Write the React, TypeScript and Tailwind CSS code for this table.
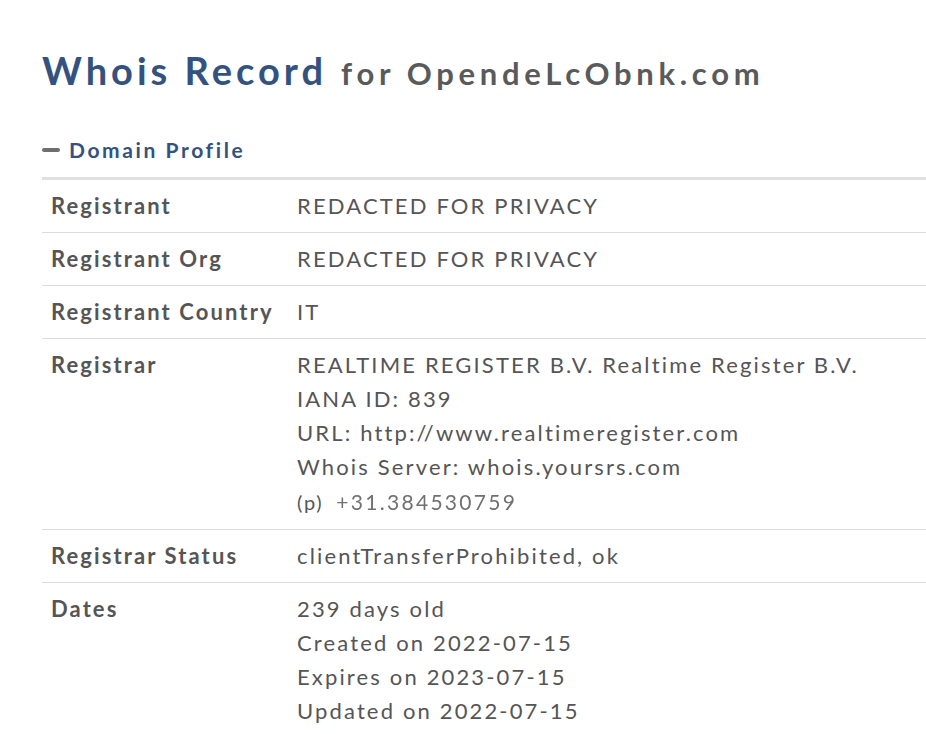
import React from "react";

type Row = {
  label: string;
  lines: React.ReactNode[];
};

const rows: Row[] = [
  { label: "Registrant", lines: ["REDACTED FOR PRIVACY"] },
  { label: "Registrant Org", lines: ["REDACTED FOR PRIVACY"] },
  { label: "Registrant Country", lines: ["IT"] },
  {
    label: "Registrar",
    lines: [
      "REALTIME REGISTER B.V. Realtime Register B.V.",
      "IANA ID: 839",
      "URL: http://www.realtimeregister.com",
      "Whois Server: whois.yoursrs.com",
      <span key="phone" className="flex h-[36px] items-center gap-[13px]">
        <span className="text-[20px] tracking-[1.7px]">(p)</span>
        <span className="text-[21px] text-[#707070] tracking-[2.3px] blur-[0.5px]">
          +31.384530759
        </span>
      </span>,
    ],
  },
  { label: "Registrar Status", lines: ["clientTransferProhibited, ok"] },
  {
    label: "Dates",
    lines: [
      "239 days old",
      "Created on 2022-07-15",
      "Expires on 2023-07-15",
      "Updated on 2022-07-15",
    ],
  },
];

export default function App() {
  return (
    <div className="min-h-screen bg-white pl-[42px] pt-[51px] font-['Lato',sans-serif] text-[#555]">
      <h1 className="flex items-baseline leading-none whitespace-nowrap">
        <span className="text-[38px] font-bold tracking-[4px] text-[#34527f]">Whois Record</span>
        <span className="ml-[14px] text-[31px] font-bold tracking-[4.7px] text-[#5a5a5a]">
          for OpendeLcObnk.com
        </span>
      </h1>

      <div className="mt-[45px] flex items-center gap-[9px]">
        <span className="block h-[4px] w-[18px] rounded-full bg-[#6f6f6f]" />
        <span className="text-[21px] font-bold tracking-[2.6px] text-[#34527f]">
          Domain Profile
        </span>
      </div>

      <div className="mt-[11px] border-t-[3px] border-[#e0e0e0]">
        {rows.map((row) => (
          <div
            key={row.label}
            className="grid grid-cols-[246px_1fr] border-b border-[#dcdcdc] last:border-b-0 py-[9px] text-[22px] leading-[34px]"
          >
            <div className="pl-[9px] font-bold tracking-[2.1px] whitespace-nowrap">{row.label}</div>
            <div className="pl-[9px] tracking-[2.15px] whitespace-nowrap">
              {row.lines.map((line, i) => (
                <div key={i}>{line}</div>
              ))}
            </div>
          </div>
        ))}
      </div>
    </div>
  );
}
